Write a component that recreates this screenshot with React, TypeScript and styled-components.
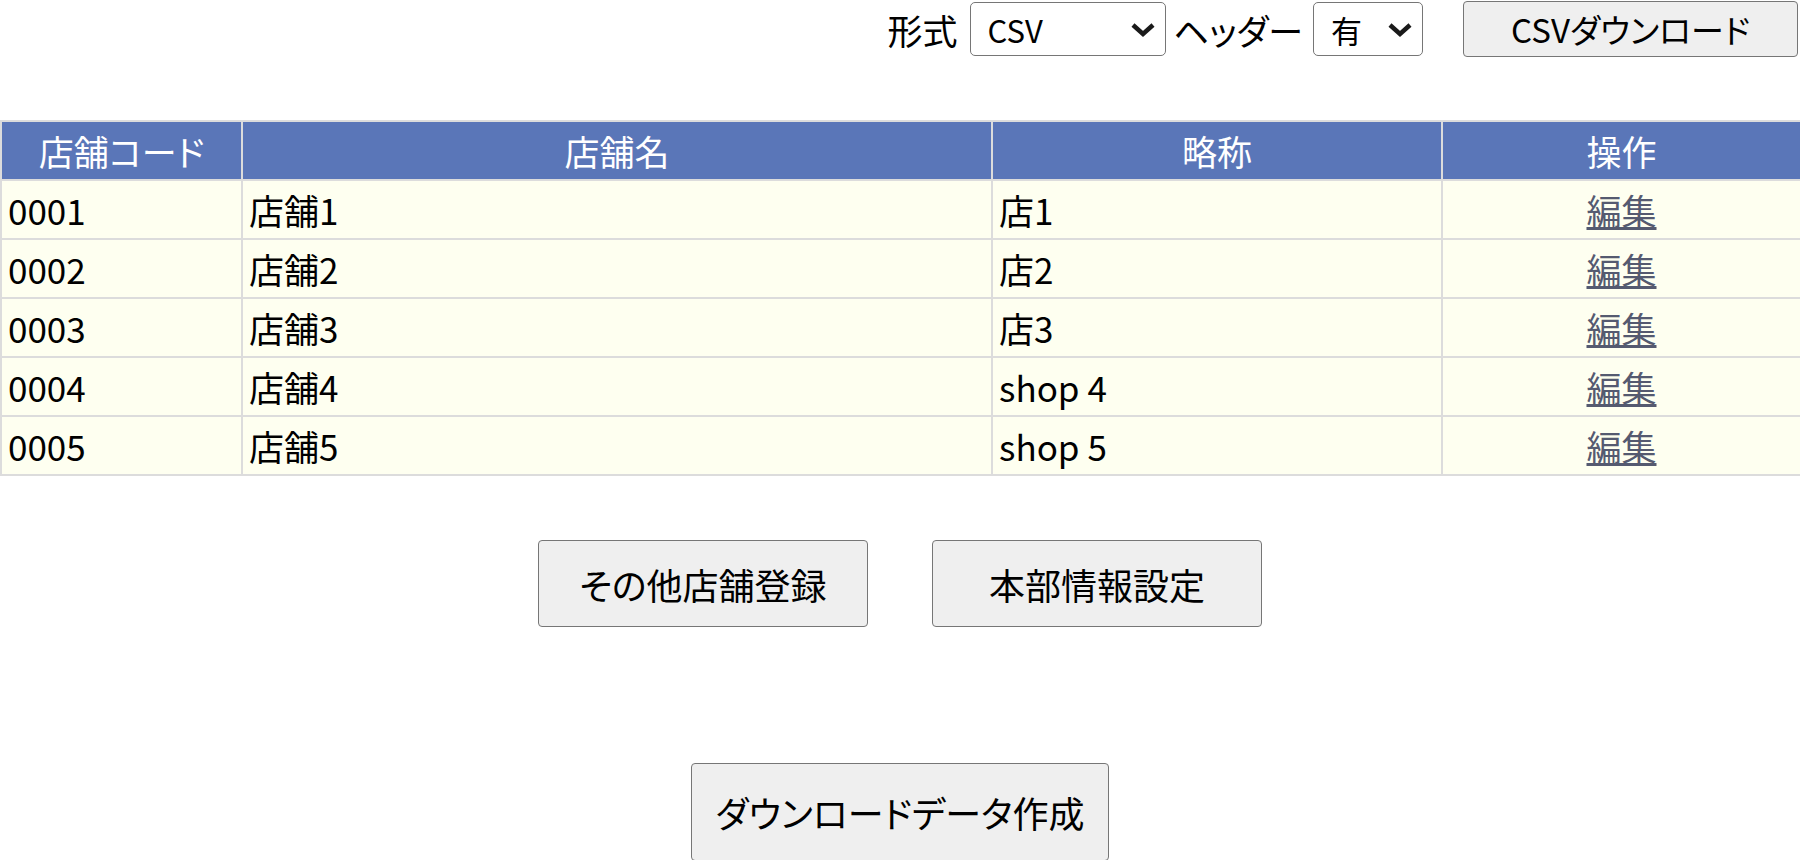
import React from "react";
import styled, { createGlobalStyle } from "styled-components";

const GlobalStyle = createGlobalStyle`
    html, body {
        margin: 0;
        padding: 0;
        background: #ffffff;
    }
    body {
        font-family: "Noto Sans CJK JP", "Noto Sans", sans-serif;
        font-feature-settings: "palt";
        color: #000000;
    }
`;

type Shop = {
    code: string;
    name: string;
    short: string;
};

const shops: Shop[] = [
    { code: "0001", name: "店舗1", short: "店1" },
    { code: "0002", name: "店舗2", short: "店2" },
    { code: "0003", name: "店舗3", short: "店3" },
    { code: "0004", name: "店舗4", short: "shop 4" },
    { code: "0005", name: "店舗5", short: "shop 5" },
];

const Chevron = () => (
    <ChevronIcon width="26" height="16" viewBox="0 0 26 16">
        <path d="M3 3 L13 12 L23 3" fill="none" stroke="#1a1a1a" strokeWidth="4.5" strokeLinejoin="miter" />
    </ChevronIcon>
);

export default function App() {
    return (
        <>
            <GlobalStyle />
            <Page>
                <Toolbar>
                    <Label>形式</Label>
                    <SelectBox $width={196} style={{ marginLeft: 12 }}>
                        <Select defaultValue="csv">
                            <option value="csv">CSV</option>
                            <option value="tsv">TSV</option>
                        </Select>
                        <Chevron />
                    </SelectBox>
                    <Label style={{ marginLeft: 8 }}>ヘッダー</Label>
                    <SelectBox $width={110} style={{ marginLeft: 10 }}>
                        <Select defaultValue="yes">
                            <option value="yes">有</option>
                            <option value="no">無</option>
                        </Select>
                        <Chevron />
                    </SelectBox>
                    <CsvButton>CSVダウンロード</CsvButton>
                </Toolbar>

                <Table>
                    <colgroup>
                        <col style={{ width: 241 }} />
                        <col style={{ width: 750 }} />
                        <col style={{ width: 450 }} />
                        <col style={{ width: 359 }} />
                    </colgroup>
                    <thead>
                        <tr>
                            <Th>店舗コード</Th>
                            <Th>店舗名</Th>
                            <Th>略称</Th>
                            <Th>操作</Th>
                        </tr>
                    </thead>
                    <tbody>
                        {shops.map((shop) => (
                            <tr key={shop.code}>
                                <Td>{shop.code}</Td>
                                <Td>{shop.name}</Td>
                                <Td>{shop.short}</Td>
                                <Td $center>
                                    <EditLink href="#">編集</EditLink>
                                </Td>
                            </tr>
                        ))}
                    </tbody>
                </Table>

                <ButtonRow>
                    <ActionButton>その他店舗登録</ActionButton>
                    <ActionButton>本部情報設定</ActionButton>
                </ButtonRow>

                <BottomRow>
                    <BigButton>ダウンロードデータ作成</BigButton>
                </BottomRow>
            </Page>
        </>
    );
}

const Page = styled.div`
    width: 1800px;
    display: flex;
    flex-direction: column;
`;

const Toolbar = styled.div`
    display: flex;
    justify-content: flex-end;
    align-items: center;
    height: 56px;
    padding: 1px 2px 0 0;
`;

const Label = styled.span`
    font-size: 35px;
    line-height: 1;
    white-space: nowrap;
`;

const SelectBox = styled.div<{ $width: number }>`
    position: relative;
    width: ${(p) => p.$width}px;
    height: 54px;
`;

const Select = styled.select`
    appearance: none;
    -webkit-appearance: none;
    width: 100%;
    height: 100%;
    font-family: "Noto Sans CJK JP", "Noto Sans", sans-serif;
    font-size: 31px;
    padding: 0 0 0 17px;
    border: 1px solid #767676;
    border-radius: 5px;
    background-color: #ffffff;
    color: #000000;
`;

const ChevronIcon = styled.svg`
    position: absolute;
    right: 10px;
    top: 20px;
    pointer-events: none;
`;

const BaseButton = styled.button`
    font-family: "Noto Sans CJK JP", "Noto Sans", sans-serif;
    font-feature-settings: "palt";
    background: #efefef;
    border: 1px solid #767676;
    border-radius: 4px;
    color: #000000;
    padding: 0;
    cursor: pointer;
`;

const CsvButton = styled(BaseButton)`
    width: 335px;
    height: 56px;
    margin-left: 40px;
    font-size: 33px;
`;

const Table = styled.table`
    margin-top: 63px;
    width: 1800px;
    table-layout: fixed;
    border-collapse: collapse;
    border: 2px solid #dcdcdc;
`;

const Th = styled.th`
    height: 57px;
    padding: 0 6px;
    background: #5a76b8;
    color: #ffffff;
    font-size: 35px;
    font-weight: 400;
    text-align: center;
    border: 2px solid #dcdcdc;
`;

const Td = styled.td<{ $center?: boolean }>`
    height: 57px;
    padding: 0 6px;
    background: #fefff0;
    font-size: 35px;
    text-align: ${(p) => (p.$center ? "center" : "left")};
    border: 2px solid #dcdcdc;
    white-space: nowrap;
`;

const EditLink = styled.a`
    color: #555a70;
    text-decoration: underline;
`;

const ButtonRow = styled.div`
    display: flex;
    justify-content: center;
    gap: 64px;
    margin-top: 64px;
`;

const ActionButton = styled(BaseButton)`
    width: 330px;
    height: 87px;
    font-size: 36px;
`;

const BottomRow = styled.div`
    display: flex;
    justify-content: center;
    margin-top: 136px;
`;

const BigButton = styled(BaseButton)`
    width: 418px;
    height: 98px;
    font-size: 36px;
`;
